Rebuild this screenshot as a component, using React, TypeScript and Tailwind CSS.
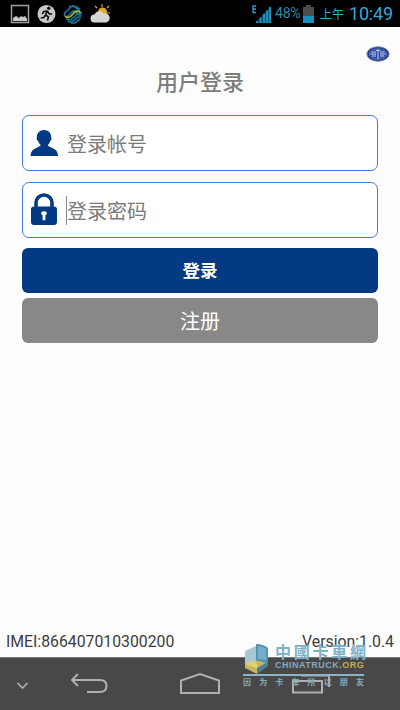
import type { ReactNode } from "react";

const latin = "font-['Roboto','Noto_Sans_CJK_SC',sans-serif]";

function StatusBar() {
  return (
    <header className="flex h-[27px] items-center bg-black pl-[10px] pr-[7px] text-[#33a9d6]">
      <div className="flex items-center gap-[7px]">
        <svg width="20" height="20" viewBox="0 0 20 20">
          <rect x="1.5" y="1.5" width="17" height="17" fill="#050505" stroke="#a0a0a0" strokeWidth="1.5" />
          <path d="M3 17v-3l3-2 3 2 2-2 2 1 2-1 2 3v2z" fill="#c8c8c8" />
        </svg>
        <svg width="19" height="20" viewBox="0 0 20 20">
          <circle cx="10" cy="10" r="9.5" fill="#c8c8c8" />
          <circle cx="12.4" cy="4" r="1.8" fill="#111" />
          <path d="M11 6.500L7 7.500 5.500 10M11 6.500L9 11l3 2-1 4M9 11l-2 3H4M11 7l2 3h3" fill="none" stroke="#111" strokeWidth="1.700" />
        </svg>
        <svg width="20" height="20" viewBox="0 0 20 20">
          <g fill="none" strokeWidth="1.7">
            <path d="M2 12L1.500 9 8 3q2-2 4 0l5 4M3 14l6-6q2-2 4 0l5 4M6 2.500h7l4 3" stroke="#13769a" />
            <path d="M2 12q3 3 6 0l4-4q3-2 6 1" stroke="#b3bd20" />
            <path d="M3 15q4 2 7-1l3-3q3-2 6-1M5 17.500q4 1 7-2l2-2q2-1 4 0M8 19h4l5-4" stroke="#13769a" />
          </g>
        </svg>
        <svg width="21" height="20" viewBox="0 0 21 20">
          <path d="M12 0v3M5 2l2 2M19 2l-2 2M20 9h-3" stroke="#dfa92c" strokeWidth="1.2" />
          <circle cx="12.500" cy="8" r="4.500" fill="#dfa92c" />
          <path d="M4.500 18.500a4 4 0 010-8 5 5 0 019-1 4.600 4.600 0 013 9z" fill="#d5d5d5" />
        </svg>
      </div>
      <div className="ml-auto flex items-center">
        <svg width="20" height="20" viewBox="0 0 20 20">
          <path d="M4 2H1v6.500h3M1 5h3" fill="none" stroke="#27a0cc" strokeWidth="1.300" />
          <path d="M3.500 19L19 2v17z" fill="#0a425a" />
          <path d="M5 19v-2M8.500 19v-5.500M12 19V9.800M15 19V6.500M18 19V3" stroke="#168fbd" strokeWidth="2.200" />
        </svg>
        <span className="ml-[3px] w-[27px] text-[14px] tracking-[-0.2px] text-[#2d89aa]">48%</span>
        <svg className="ml-px" width="11" height="18" viewBox="0 0 11 18">
          <path d="M3 0h5v2h3v16H0V2h3z" fill="#4c4c4c" />
          <path d="M0 11h11v7H0z" fill="#168fbd" />
        </svg>
        <span className="ml-[6px] w-[24px] pt-[2px] text-[12px]">上午</span>
        <span className="ml-[5px] w-[44px] text-[18px] tracking-[-0.2px]">10:49</span>
      </div>
    </header>
  );
}

function BrandBadge() {
  return (
    <svg width="24" height="16" viewBox="0 0 24 16">
      <ellipse cx="12" cy="8" rx="11.200" ry="7.300" fill="#1d3688" stroke="#8490ae" strokeWidth="1" />
      <ellipse cx="12" cy="8" rx="8.800" ry="5.200" fill="#2b4aa0" stroke="#7b90c8" strokeWidth=".7" />
      <path d="M12 3.500v9.500M10 4.500h4M5.500 6H10M4.500 8H10M6 10h4M14 6h4.500M14 8h5.500M14 10h4" stroke="#c9d5ef" strokeWidth="1" />
    </svg>
  );
}

function Field({ icon, label, focused }: { icon: ReactNode; label: string; focused?: boolean }) {
  return (
    <div className="flex h-[56px] items-center rounded-[7px] border border-[#3f79de] bg-white pl-[7px]">
      <div className="w-[37px]">{icon}</div>
      <div className="relative pt-[3px] text-[20px] leading-none text-[#7b7b7b]">
        {focused && <span className="absolute -left-px -top-[3px] h-[29px] w-px bg-[#888]" />}
        {label}
      </div>
    </div>
  );
}

function UserIcon() {
  return (
    <svg width="29" height="28" viewBox="0 0 30 28">
      <path d="M7 8.500C7 3.500 10 .5 14.500 .5S22 3.500 22 8.500q1 2-1 3.500-.6 2.500-2.500 4 0 1 2 2l5 2.500q3 1.500 3.500 7H.5q.5-5.500 3.500-7L9 18q2-1 2-2-2-1.500-2.700-4Q6 10.500 7 8.500z" fill="#043983" />
    </svg>
  );
}

function LockIcon() {
  return (
    <svg className="mb-[2px]" width="28" height="33" viewBox="0 0 28 33">
      <path d="M6 14V10a8 8 0 0116 0v4" fill="none" stroke="#043983" strokeWidth="3.600" />
      <rect x="1" y="13.500" width="26" height="18.500" rx="3" fill="#043983" />
      <path d="M11.200 20.500a2.800 2.300 0 015.600 0q0 1.200-1.400 1.800v5h-2.800v-5q-1.400-.6-1.400-1.800z" fill="#fff" />
    </svg>
  );
}

// Site logo laid over the page footer and the navigation bar
function Watermark() {
  return (
    <div className="absolute left-[243px] top-[641px] h-[46px] w-[124px] text-[#86a9b8]">
      <svg className="absolute left-0 top-0" width="28" height="35" viewBox="0 0 28 35">
        <path d="M2 10l11-5v15L2 24z" fill="#a5c9d6" />
        <path d="M13 3q7 0 12 4v17l-12 8V20z" fill="#5093b5" />
        <path d="M15 5q5 0 8 3v11l-8-1z" fill="#75aec6" />
        <path d="M2 23l10-4 11 3-9 5v6L2 27z" fill="#c9b75d" />
        <path d="M2 23l10-4 3 7-2 1z" fill="#e0d077" />
        <path d="M14 27l11-6v4l-11 8z" fill="#4c8198" />
      </svg>
      <div className="absolute left-[32px] top-[2px] flex w-[91px] justify-between font-['Noto_Sans_CJK_SC',sans-serif] text-[16px] font-bold leading-[16px] text-[#80b1ca]">
        {"中國卡車網".split("").map((c) => <span key={c}>{c}</span>)}
      </div>
      <div className="absolute left-[32px] top-[20px] whitespace-nowrap font-['Liberation_Sans',sans-serif] text-[9px] font-bold leading-[9px] tracking-[0.5px]">
        CHINATRUCK<span className="text-[#c4ad50]">.ORG</span>
      </div>
      <div className="absolute left-0 top-[33px] h-[2px] w-[121px] bg-[#8eb4c4]" />
      <div className="absolute left-0 top-[37px] flex w-[121px] justify-between font-['Noto_Sans_CJK_SC',sans-serif] text-[8px] font-bold leading-[8px]">
        {"因为卡车所以朋友".split("").map((c) => <span key={c}>{c}</span>)}
      </div>
    </div>
  );
}

function NavBar() {
  return (
    <nav className="flex h-[53px] items-center border-t border-[#777] bg-[#48484a]">
      <svg width="400" height="52" viewBox="0 0 400 52" fill="none" stroke="#b0b0b0" strokeWidth="2">
        <path d="M17.500 25l5 5 5-5" strokeWidth="1.700" />
        <path d="M78 16l-6 6 6 6M72 22h28q6.500 0 6.500 6t-6.500 6H87" />
        <path d="M181 35V22.500l19-6.500 19 6.500V35z" />
        <path d="M301 17.500h28v11.500" />
        <path d="M293 23h29v11.500h-29z" />
      </svg>
    </nav>
  );
}

export default function App() {
  return (
    <div className={`relative flex h-[710px] w-[400px] flex-col overflow-hidden bg-[#fdfdfd] ${latin}`}>
      <StatusBar />
      <main className="flex flex-1 flex-col px-[22px]">
        <div className="-mr-[12px] mt-[19px] flex justify-end">
          <BrandBadge />
        </div>
        <h1 className="mt-[10px] text-center text-[22px] font-medium leading-[22px] text-[#7d7d7d]">用户登录</h1>
        <div className="mt-[21px] grid gap-[11px]">
          <Field icon={<UserIcon />} label="登录帐号" />
          <Field icon={<LockIcon />} label="登录密码" focused />
        </div>
        <button className="mt-[10px] h-[45px] rounded-[6px] bg-[#043983] pt-[2px] text-[17.500px] font-bold text-white">登录</button>
        <button className="mt-[5px] h-[45px] rounded-[6px] bg-[#888] pt-[2px] text-[20px] text-white">注册</button>
      </main>
      <footer className="flex h-[32px] items-center justify-between pl-[6px] pr-[6px] pt-[2px] text-[15.800px] text-[#3c3c3c]">
        <span>IMEI:866407010300200</span>
        <span>Version:1.0.4</span>
      </footer>
      <NavBar />
      <Watermark />
    </div>
  );
}
